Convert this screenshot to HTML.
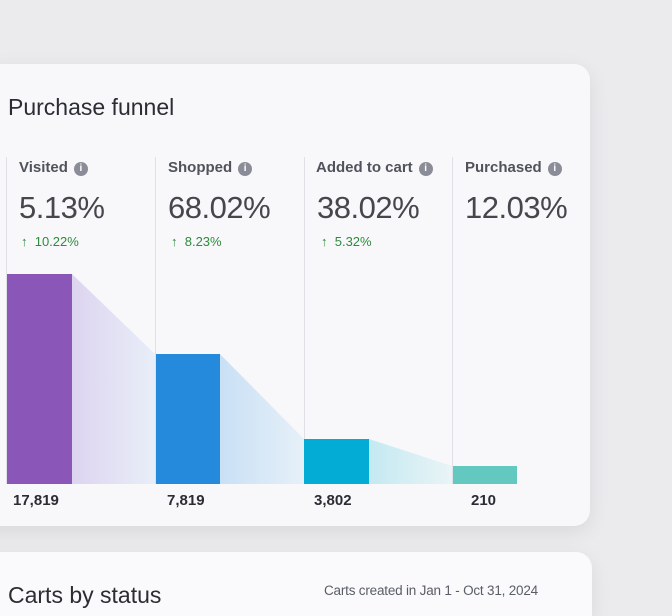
<!DOCTYPE html>
<html><head><style>
html,body{margin:0;width:672px;height:616px;overflow:hidden}
body{background:#ebebee;font-family:"Liberation Sans",sans-serif;position:relative}
.card{position:absolute;background:#f8f8fb;border-radius:16px;box-shadow:0 6px 20px rgba(0,0,0,0.08)}
.t{position:absolute;color:#2b2d33}
.lab{position:absolute;top:159px;font-size:15px;color:#50535b;font-weight:bold;letter-spacing:0}
.lab i{display:inline-block;width:14px;height:14px;border-radius:50%;background:#8a8d98;color:#fff;font-size:10px;font-style:normal;text-align:center;line-height:14px;vertical-align:1px;margin-left:6px}
.pct{position:absolute;top:190px;font-size:31px;color:#45474d;letter-spacing:-0.5px}
.chg{position:absolute;top:234px;font-size:13px;color:#2e8a3e}
.num{position:absolute;top:492px;font-size:15px;font-weight:bold;color:#2b2d33}
.div{position:absolute;top:157px;width:1px;height:327px;background:#e0e1e6}
</style></head><body>
<div class="card" style="left:-20px;top:64px;width:610px;height:462px"></div>
<div class="card" style="left:-20px;top:552px;width:612px;height:64px;border-bottom-left-radius:0;border-bottom-right-radius:0;background:#fafafc"></div>
<div class="t" style="left:8px;top:94px;font-size:23px">Purchase funnel</div>
<div class="div" style="left:6px"></div><div class="div" style="left:155px"></div><div class="div" style="left:304px"></div><div class="div" style="left:452px"></div>
<div class="lab" style="left:19px">Visited<i>i</i></div>
<div class="lab" style="left:168px">Shopped<i>i</i></div>
<div class="lab" style="left:316px">Added to cart<i>i</i></div>
<div class="lab" style="left:465px">Purchased<i>i</i></div>
<div class="pct" style="left:19px">5.13%</div>
<div class="pct" style="left:168px">68.02%</div>
<div class="pct" style="left:317px">38.02%</div>
<div class="pct" style="left:465px">12.03%</div>
<div class="chg" style="left:21px">↑&nbsp; 10.22%</div>
<div class="chg" style="left:171px">↑&nbsp; 8.23%</div>
<div class="chg" style="left:321px">↑&nbsp; 5.32%</div>
<svg style="position:absolute;left:0;top:0" width="672" height="616">
<defs>
<linearGradient id="g1"><stop offset="0" stop-color="#ddd4f0"/><stop offset="1" stop-color="#e8eef8"/></linearGradient>
<linearGradient id="g2"><stop offset="0" stop-color="#c9e0f5"/><stop offset="1" stop-color="#e6f0f8"/></linearGradient>
<linearGradient id="g3"><stop offset="0" stop-color="#c4e9f2"/><stop offset="1" stop-color="#e9f4f6"/></linearGradient>
</defs>
<polygon points="72,274 155,354 155,484 72,484" fill="url(#g1)"/>
<polygon points="220,354 304,439 304,484 220,484" fill="url(#g2)"/>
<polygon points="369,439 452,466 452,484 369,484" fill="url(#g3)"/>
<rect x="7" y="274" width="65" height="210" fill="#8a57b8"/>
<rect x="156" y="354" width="64" height="130" fill="#2589dc"/>
<rect x="304" y="439" width="65" height="45" fill="#03acd5"/>
<rect x="453" y="466" width="64" height="18" fill="#62c8c0"/>
</svg>
<div class="num" style="left:13px">17,819</div>
<div class="num" style="left:167px">7,819</div>
<div class="num" style="left:314px">3,802</div>
<div class="num" style="left:471px">210</div>
<div class="t" style="left:8px;top:582px;font-size:23px">Carts by status</div>
<div class="t" style="left:324px;top:583px;font-size:13.5px;color:#5a5d66;letter-spacing:-0.2px">Carts created in Jan 1 - Oct 31, 2024</div>
</body></html>
